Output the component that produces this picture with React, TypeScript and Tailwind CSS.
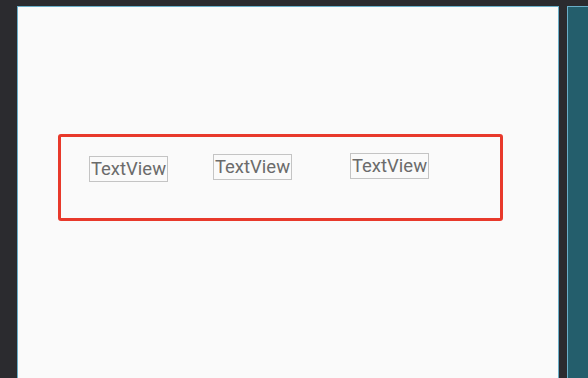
export default function App() {
  return (
    <div className="flex h-[378px] w-[588px] overflow-hidden bg-[#2b2b2f] pl-[17px] pt-[6px]" style={{ fontFamily: "Roboto, 'Liberation Sans', sans-serif" }}>
      <div className="h-[400px] w-[542px] border border-[#6aaec8] bg-[#fafafa] pl-[40px] pt-[127px]">
        <div className="flex h-[87px] w-[445px] items-start rounded-[3px] border-[3px] border-[#e8392b]">
          <div className="ml-[28px] mt-[19px] flex h-[26px] w-[79px] items-center justify-center border border-[#c4c4c4] text-[18.5px] leading-none text-[#6b6b6b]">TextView</div>
          <div className="ml-[45px] mt-[17px] flex h-[26px] w-[79px] items-center justify-center border border-[#c4c4c4] text-[18.5px] leading-none text-[#6b6b6b]">TextView</div>
          <div className="ml-[58px] mt-[16px] flex h-[26px] w-[79px] items-center justify-center border border-[#c4c4c4] text-[18.5px] leading-none text-[#6b6b6b]">TextView</div>
        </div>
      </div>
      <div className="ml-[8px] h-[400px] flex-1 border-l border-t border-[#6aaec8] bg-[#245e6c]" />
    </div>
  );
}
